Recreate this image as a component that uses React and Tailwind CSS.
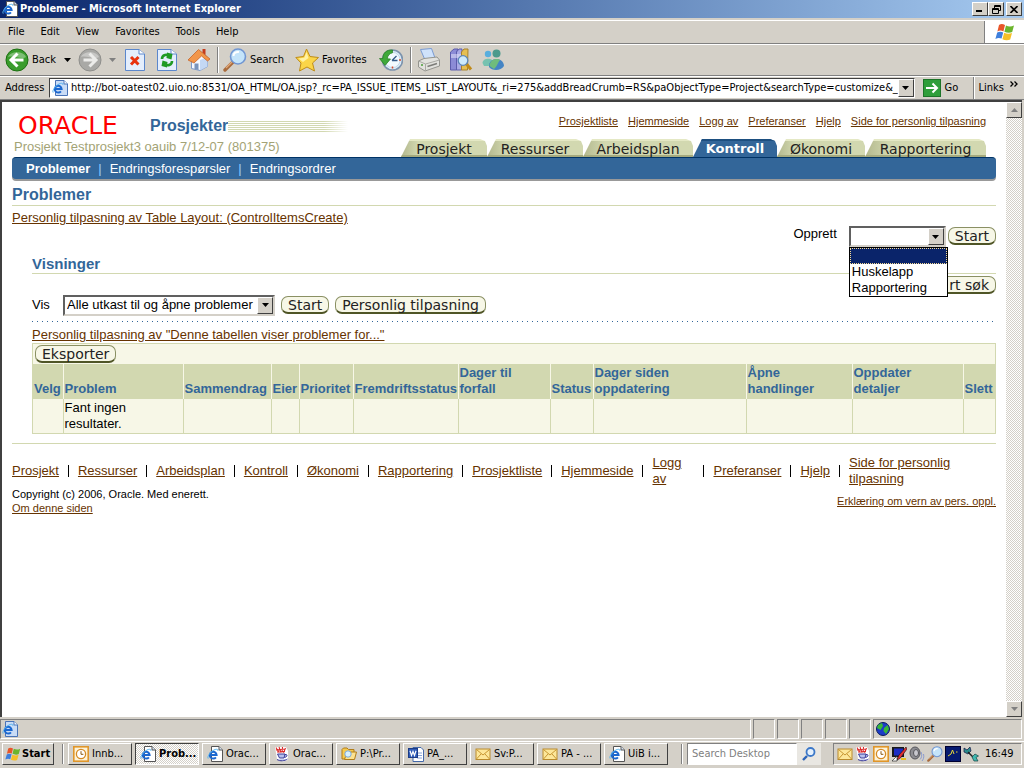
import React from "react";

const chromeFont = "font-['DejaVu_Sans_Condensed','DejaVu_Sans',sans-serif]";

/* ---------- icons ---------- */

function IEMark() {
  return (
    <g fill="none" stroke="#1c68d0">
      <path d="M2.800 9H9.600A3.400 3.400 0 1 0 8.900 11.300" strokeWidth="2" />
      <path d="M1.200 12.600C-.2 11 3.200 5.800 7 4C9.800 2.600 11.400 3.400 10.800 5" stroke="#55b4f0" strokeWidth="1" />
    </g>
  );
}

function IEIcon({ className = "size-4" }) {
  return (
    <svg viewBox="0 0 16 16" className={className} aria-hidden="true">
      <path d="M4.500 .5H12L15.500 4V15.500H4.500Z" fill="#fff" stroke="#555" />
      <path d="M12 .5V4H15.500" fill="#d8e4f4" stroke="#555" />
      <IEMark />
    </svg>
  );
}

function IEBlueIcon() {
  return (
    <svg viewBox="0 0 16 16" className="size-4 shrink-0" aria-hidden="true">
      <path d="M3.500 .5H12L15.500 4V15.500H3.500Z" fill="#c9dcf6" stroke="#4a74b8" />
      <path d="M12 .5V4H15.500" fill="#fff" stroke="#4a74b8" />
      <IEMark />
    </svg>
  );
}

function WindowsFlag({ className }) {
  return (
    <svg viewBox="0 0 20 20" className={className} aria-hidden="true">
      <path d="M4 3C6 1.600 8 2 10 3L8.400 9.400C6.400 8.400 4.600 8.200 2.400 9.600Z" fill="#e8562a" />
      <path d="M11 3.400C13 4.600 16 5 19 3.400L17.200 10C15 11.200 12 11 9.400 9.800Z" fill="#6cb52d" />
      <path d="M2.200 10.600C4.200 9.400 6.200 9.400 8.200 10.400L6.600 16.600C4.600 15.600 2.600 15.600 .4 17Z" fill="#3f7fdc" />
      <path d="M9.200 10.800C11.600 12 14.400 12.200 17 11L15.200 17.400C12.800 18.600 10 18.400 7.400 17.200Z" fill="#f6bf26" />
    </svg>
  );
}

function RoundArrow({ green }) {
  return (
    <svg viewBox="0 0 24 24" className="size-6" aria-hidden="true">
      <circle cx="12" cy="12" r="11" fill={green ? "#3a9c2c" : "#a9a9a6"} stroke={green ? "#1c7012" : "#8f8f8c"} />
      <path d="M3 9C5 2.500 19 2.500 21 9C17 12 8 7 3 9Z" fill="#fff" opacity=".35" />
      {green ? (
        <path d="M12.500 5.500L6 12L12.500 18.500M6.500 12H18.500" fill="none" stroke="#fff" strokeWidth="3" />
      ) : (
        <path d="M11.500 5.500L18 12L11.500 18.500M17.500 12H5.500" fill="none" stroke="#ececea" strokeWidth="3" />
      )}
    </svg>
  );
}

function StopIcon() {
  return (
    <svg viewBox="0 0 20 24" className="h-6 w-5" aria-hidden="true">
      <path d="M.5 1.500H14L19.500 6V22.500H.5Z" fill="#e4eefc" stroke="#5b87cc" />
      <path d="M14 1.500V6H19.500" fill="#fff" stroke="#5b87cc" />
      <path d="M6 9L13.500 16.500M13.500 9L6 16.500" stroke="#e8320e" strokeWidth="3" />
    </svg>
  );
}

function RefreshIcon() {
  return (
    <svg viewBox="0 0 20 24" className="h-6 w-5" aria-hidden="true">
      <path d="M.5 1.500H14L19.500 6V22.500H.5Z" fill="#e4eefc" stroke="#5b87cc" />
      <path d="M14 1.500V6H19.500" fill="#fff" stroke="#5b87cc" />
      <path d="M5 11C5 7 9 6 11.500 7.500M15 13C15 17 11 18 8.500 16.500" fill="none" stroke="#1f9a24" strokeWidth="2.600" />
      <path d="M10 4.500L15.500 6L14.500 11.500L9.500 10Z" fill="#1f9a24" />
      <path d="M10 19.500L4.500 18L5.500 12.500L10.500 14Z" fill="#1f9a24" />
    </svg>
  );
}

function HomeIcon() {
  return (
    <svg viewBox="0 0 24 24" className="size-6" aria-hidden="true">
      <path d="M4.500 12V20.500L13 22.500L20.500 18.500V9L14 4Z" fill="#f5f8ff" stroke="#7c98c8" />
      <path d="M13 22.500V12L20.500 9V18.500Z" fill="#c4d8f4" />
      <path d="M15.500 1H18.500V7L15.500 5Z" fill="#c63c1c" />
      <path d="M1 12L11.500 1.500L23 11L20.500 13L14.500 8L7 15Z" fill="#f2964a" stroke="#c8642a" strokeWidth=".8" />
      <path d="M7.500 15.500H11.500V22L7.500 21Z" fill="#7a94bc" />
    </svg>
  );
}

function Magnifier({ className = "size-6" }) {
  return (
    <svg viewBox="0 0 24 24" className={className} aria-hidden="true">
      <path d="M9.500 14.500L2 22" stroke="#a86a3c" strokeWidth="3.400" strokeLinecap="round" />
      <path d="M9 14L3 20" stroke="#e0a878" strokeWidth="1.200" />
      <circle cx="15" cy="8.500" r="7.500" fill="#c4e4fa" stroke="#7196d2" strokeWidth="1.600" />
      <path d="M10.500 8C10.500 5 13 3.500 16 4" stroke="#fff" strokeWidth="2" fill="none" />
    </svg>
  );
}

function StarIcon() {
  return (
    <svg viewBox="0 0 24 24" className="size-6" aria-hidden="true">
      <path d="M11.500 1L15 8.500L23.500 9.500L17.500 15L19.500 23L12 19L4.500 23L6 15L.8 9.500L8.500 8.500Z" fill="#fbd548" stroke="#bf8d18" />
      <path d="M11.500 4L13.500 10L8 14L3.500 10.500L9.300 9.700Z" fill="#fff2a4" />
    </svg>
  );
}

function HistoryIcon() {
  return (
    <svg viewBox="0 0 24 24" className="size-6" aria-hidden="true">
      <circle cx="13.500" cy="12" r="10" fill="#dceefa" stroke="#7d93ad" strokeWidth="1.600" />
      <circle cx="13.500" cy="12" r="7.600" fill="#f2faff" stroke="#b0c4d8" strokeWidth=".6" />
      <path d="M13 12.500L17.500 8M13 12.500H18.500" stroke="#335a88" strokeWidth="1.300" />
      <path d="M13.500 18.500V20.500M20 12H22" stroke="#d84a2a" strokeWidth="1.500" />
      <path d="M13.500 2C7.500 1.500 3.800 5 3.800 10.500H.5L6 17.500L11.500 11L8.300 10.800C8.600 7.500 10.500 5.500 13.500 4.800Z" fill="#3fa83a" stroke="#1f7a1c" strokeWidth=".7" />
    </svg>
  );
}

function PrinterIcon() {
  return (
    <svg viewBox="0 0 24 24" className="size-6" aria-hidden="true">
      <path d="M3.500 1.500L14.500 .5L18 10L8 12Z" fill="#cfe2fb" stroke="#7a9bd2" />
      <path d="M1.500 13L7 10.500L20 9L22.500 12V18L8 23L1.500 19Z" fill="#e2e2de" stroke="#95958f" />
      <path d="M1.500 13L8.500 16L22.500 12M8.500 16V23" fill="none" stroke="#aaaaa4" />
      <path d="M10.500 18.500L20 15.500" stroke="#7c7c78" strokeWidth="1.600" />
      <circle cx="5" cy="17" r="1" fill="#4a9e3a" />
    </svg>
  );
}

function ResearchIcon() {
  return (
    <svg viewBox="0 0 24 24" className="size-6" aria-hidden="true">
      <path d="M1.500 4L5 1H9L7.500 4V22H1.500Z" fill="#8b8bd6" stroke="#5c5cac" />
      <path d="M7.500 4L10 1H13L12.500 22H7.500Z" fill="#a9a9e6" stroke="#5c5cac" />
      <path d="M12.500 4L15 1H19L18.500 22H12.500Z" fill="#e6bf52" stroke="#a8822c" />
      <path d="M2 7H12M2 9H12" stroke="#e8e8fc" />
      <path d="M17.500 16L22 21.500" stroke="#c08a1a" strokeWidth="3" />
      <circle cx="14" cy="12.500" r="4.800" fill="#cdeafc" stroke="#5c86b8" strokeWidth="1.300" />
    </svg>
  );
}

function MessengerIcon() {
  return (
    <svg viewBox="0 0 24 24" className="size-6" aria-hidden="true">
      <circle cx="7" cy="6" r="3.200" fill="#58aede" />
      <path d="M1.500 15C1.500 10 12 9 12.500 15L10 18H3Z" fill="#77c2b0" />
      <circle cx="15.500" cy="5.500" r="4" fill="#4b9a8c" />
      <path d="M8 19C7 9 22.500 8 23 18C20 23 11 23 8 19Z" fill="#4484c4" />
      <path d="M8.500 18C9 10.500 17 10 19 12C17 14 16 19 13 21Z" fill="#6fbc7c" />
    </svg>
  );
}

function MailIcon({ className = "size-4" }) {
  return (
    <svg viewBox="0 0 16 16" className={className} aria-hidden="true">
      <rect x="1" y="3" width="14" height="10.500" fill="#fde79a" stroke="#b98a2c" />
      <path d="M1.500 3.500L8 9L14.500 3.500M1.500 13L6 8M14.500 13L10 8" fill="none" stroke="#c79632" />
    </svg>
  );
}

function OutlookIcon({ className = "size-4" }) {
  return (
    <svg viewBox="0 0 16 16" className={className} aria-hidden="true">
      <rect x=".8" y=".8" width="14.400" height="14.400" fill="#fdf3d8" stroke="#e0962a" strokeWidth="1.600" />
      <circle cx="8" cy="8" r="4.600" fill="#fff" stroke="#d48a24" strokeWidth="1.300" />
      <path d="M8 5.200V8.300H10.400" fill="none" stroke="#8a5a14" />
    </svg>
  );
}

function JavaIcon({ className = "size-4" }) {
  return (
    <svg viewBox="0 0 16 16" className={className} aria-hidden="true">
      <path d="M1 1H12L14 5V14L9 15.500L3 13Z" fill="#fff" />
      <path d="M2 1.500L5 6.500M5 1L7 6.500M8.500 1L8 6.500M11.500 2L9.500 7M2 4L11 3M3 6L11 5.500" stroke="#dc2b2b" strokeWidth="1.100" fill="none" />
      <path d="M3.500 8H11L10 12H5.500ZM11 8.500C14 8 13.500 11 10.500 11.500M3 13.500C6 15.500 11 15 13.500 13" fill="#b9c2ee" stroke="#3c3c98" />
    </svg>
  );
}

function FolderIcon() {
  return (
    <svg viewBox="0 0 16 16" className="size-4" aria-hidden="true">
      <path d="M1 3.500L2.500 2H6L7.500 3.500H13V13H1Z" fill="#f6c94e" stroke="#b07c18" />
      <path d="M3.500 13.500L6 6H15.500L13.500 13.500Z" fill="#fce291" stroke="#b07c18" />
      <circle cx="7" cy="8" r="3.200" fill="#d8f0fc" stroke="#7aa8d8" />
    </svg>
  );
}

function WordIcon() {
  return (
    <svg viewBox="0 0 16 16" className="size-4" aria-hidden="true">
      <path d="M5 1.500H13L15.500 4V15.500H5Z" fill="#fff" stroke="#4468a8" />
      <path d="M9 7H14M9 9.500H14M9 12H14" stroke="#88a4d8" />
      <rect x=".5" y="2.500" width="9" height="9" fill="#2f5cb8" stroke="#1c3c86" />
      <path d="M2 4.800L3.500 9.500L5 5.500L6.500 9.500L8 4.800" fill="none" stroke="#fff" strokeWidth="1.200" />
    </svg>
  );
}

function GlobeIcon() {
  return (
    <svg viewBox="0 0 16 16" className="size-4" aria-hidden="true">
      <circle cx="8" cy="8" r="6.500" fill="#1c3cc8" stroke="#0a1c58" />
      <path d="M3 4L7 2L8 5L5.500 9L2 7ZM9 7L12.500 4L14 8L11 13L8.500 10Z" fill="#38b838" />
    </svg>
  );
}

function ScreenIcon() {
  return (
    <svg viewBox="0 0 16 16" className="size-4" aria-hidden="true">
      <path d="M1 1H13V11H1Z" fill="#1a1a1a" />
      <path d="M3 2.500H12V9.500H3Z" fill="#1c2cc4" />
      <path d="M15 1L8 9L5.500 14.500L9.500 12L16 3Z" fill="#e03030" stroke="#111" strokeWidth=".6" />
      <path d="M1 15L6 10V15Z" fill="#fff" stroke="#111" strokeWidth=".6" />
      <path d="M10 13H15" stroke="#e8c020" strokeWidth="2" />
    </svg>
  );
}

function SpeakerIcon() {
  return (
    <svg viewBox="0 0 16 16" className="size-4" aria-hidden="true">
      <ellipse cx="6" cy="7" rx="5" ry="6" fill="#8d8d92" stroke="#55555a" />
      <ellipse cx="7" cy="7" rx="2.500" ry="3.500" fill="#c8c8ce" stroke="#55555a" />
      <path d="M12 6C13.500 9 12.500 12 11 13.500M14.500 8C15.500 11 14 14 13 15" fill="none" stroke="#8c9cd0" />
    </svg>
  );
}

function GraphIcon() {
  return (
    <svg viewBox="0 0 16 16" className="size-4" aria-hidden="true">
      <rect x=".5" y=".5" width="15" height="15" fill="#061a70" stroke="#000030" />
      <path d="M3 10L6 8L7.500 4L9 8M11 6H12.500" fill="none" stroke="#e8d838" />
    </svg>
  );
}

function ModemIcon() {
  return (
    <svg viewBox="0 0 16 16" className="size-4" aria-hidden="true">
      <path d="M1 2L4 4L7 1L8 5L5 8L1 6Z" fill="#2c8c8c" stroke="#114" strokeWidth=".7" />
      <path d="M5 6L11 12" stroke="#222" strokeWidth="1.500" />
      <path d="M9 11L12 8L15.500 10L13 11.500L15 15L11 15Z" fill="#42b8b0" stroke="#144" strokeWidth=".7" />
    </svg>
  );
}

function Triangle({ className = "fill-black" }) {
  return (
    <svg viewBox="0 0 7 4" className={`h-1 w-[7px] ${className}`} aria-hidden="true">
      <path d="M0 0H7L3.500 4Z" />
    </svg>
  );
}

/* ---------- shared pieces ---------- */

const raised = "border border-t-white border-l-white border-r-[#404040] border-b-[#404040] bg-[#d4d0c8]";
const sunken = "border border-t-[#808080] border-l-[#808080] border-r-white border-b-white";

function Divider({ className = "" }) {
  return <div className={`w-[2px] self-stretch border-l border-[#808080] bg-white ${className}`} />;
}

function OraButton({ children, className = "justify-center", ...rest }) {
  return (
    <button
      className={`flex h-[18px] items-center rounded-[7px] border border-b-2 border-[#8a9063] border-b-[#4f5526] bg-[#f7f7e7] px-1.5 font-['DejaVu_Sans',sans-serif] text-[14px] leading-4 whitespace-nowrap text-[#222] ${className}`}
      {...rest}
    >
      {children}
    </button>
  );
}

function OraSelect({ id, className, children }) {
  return (
    <div className={`relative h-[21px] ${className}`}>
      <select
        id={id}
        className="size-full appearance-none border-2 border-t-[#606060] border-r-[#d4d0c8] border-b-[#d4d0c8] border-l-[#606060] bg-white pl-0.5 text-[13px] leading-4 text-black outline-none"
      >
        {children}
      </select>
      <span className={`pointer-events-none absolute top-0.5 right-0.5 flex h-[17px] w-4 items-center justify-center ${raised}`}>
        <Triangle />
      </span>
    </div>
  );
}

function ALink({ children, className = "" }) {
  return (
    <a href="#" className={`text-[#663300] underline ${className}`}>
      {children}
    </a>
  );
}

/* ---------- browser chrome ---------- */

function TitleBar() {
  return (
    <header className="flex h-[18px] items-center bg-linear-to-r from-[#0a246a] to-[#a6caf0] pr-0.5 pl-0.5">
      <IEIcon />
      <h1 className="ml-0.5 flex-1 text-[11px] leading-4 font-bold text-white">Problemer - Microsoft Internet Explorer</h1>
      <div className="flex">
        <button aria-label="Minimize" className={`flex h-3.5 w-4 items-end p-[3px] ${raised}`}>
          <span className="h-0.5 w-1.5 bg-black" />
        </button>
        <button aria-label="Restore" className={`flex h-3.5 w-4 items-center justify-center ${raised}`}>
          <svg viewBox="0 0 9 9" className="size-[9px]">
            <path d="M2.500 3V.5H8.500V5.500H6.500M2.500 1.500H8.500M.5 3.500H6.500V8.500H.5ZM.5 4.500H6.500" fill="none" stroke="#000" />
          </svg>
        </button>
        <button aria-label="Close" className={`ml-0.5 flex h-3.5 w-4 items-center justify-center ${raised}`}>
          <svg viewBox="0 0 8 7" className="h-[7px] w-2">
            <path d="M.5 0L7.500 7M7.500 0L.5 7" stroke="#000" strokeWidth="1.600" />
          </svg>
        </button>
      </div>
    </header>
  );
}

const menus = ["File", "Edit", "View", "Favorites", "Tools", "Help"];

function MenuBar() {
  return (
    <nav className="mt-0.5 flex h-6 border-t border-b border-t-white border-b-[#808080]">
      <div className="flex flex-1 items-center gap-4 pl-2">
        {menus.map((m) => (
          <button key={m}>{m}</button>
        ))}
      </div>
      <div className="flex w-10 items-center justify-center border-l border-[#808080] bg-white">
        <WindowsFlag className="size-5" />
      </div>
    </nav>
  );
}

function Toolbar() {
  return (
    <div className="flex h-8 items-center border-t border-b border-t-white border-b-[#808080] pl-[5px]">
      <button className="flex items-center gap-[3px]">
        <RoundArrow green />
        Back
      </button>
      <button aria-label="Back history" className="ml-2">
        <Triangle />
      </button>
      <button aria-label="Forward" className="ml-[7px]">
        <RoundArrow />
      </button>
      <button aria-label="Forward history" className="ml-[7px]">
        <Triangle className="fill-[#808080]" />
      </button>
      <div className="ml-[9px] flex items-center gap-3">
        <button aria-label="Stop">
          <StopIcon />
        </button>
        <button aria-label="Refresh">
          <RefreshIcon />
        </button>
        <button aria-label="Home" className="-ml-0.5">
          <HomeIcon />
        </button>
      </div>
      <Divider className="my-0.5 ml-1.5" />
      <button className="ml-1 flex items-center gap-[3px]">
        <Magnifier />
        Search
      </button>
      <button className="ml-[11px] flex items-center gap-[3px]">
        <StarIcon />
        Favorites
      </button>
      <button aria-label="History" className="ml-3">
        <HistoryIcon />
      </button>
      <Divider className="my-0.5 ml-[7px]" />
      <div className="ml-[5px] flex items-center gap-2">
        <button aria-label="Print">
          <PrinterIcon />
        </button>
        <button aria-label="Research">
          <ResearchIcon />
        </button>
        <button aria-label="Messenger">
          <MessengerIcon />
        </button>
      </div>
    </div>
  );
}

function AddressBar() {
  return (
    <div className="flex h-6 items-center border-t border-b border-t-white border-b-[#808080]">
      <label htmlFor="address" className="w-[49px] pl-[5px]">
        Address
      </label>
      <div className="flex h-5 min-w-0 flex-1 items-center border border-t-[#404040] border-r-white border-b-white border-l-[#404040] bg-white pl-0.5">
        <IEBlueIcon />
        <input
          id="address"
          readOnly
          className="ml-[3px] min-w-0 flex-1 bg-transparent leading-4 outline-none"
          value="http://bot-oatest02.uio.no:8531/OA_HTML/OA.jsp?_rc=PA_ISSUE_ITEMS_LIST_LAYOUT&_ri=275&addBreadCrumb=RS&paObjectType=Project&searchType=customize&_"
        />
        <button aria-label="Show addresses" className={`flex h-[18px] w-4 items-center justify-center ${raised}`}>
          <Triangle />
        </button>
      </div>
      <button className="ml-2 flex w-[50px] items-center gap-1">
        <svg viewBox="0 0 18 18" className="size-[18px]" aria-hidden="true">
          <rect x=".5" y=".5" width="17" height="17" fill="#2f9e3a" stroke="#1d7428" />
          <path d="M3 9H14M9.500 4.500L14 9L9.500 13.500" fill="none" stroke="#fff" strokeWidth="2" />
        </svg>
        Go
      </button>
      <Divider />
      <span className="ml-1">Links</span>
      <button aria-label="More links" className="mr-1.5 ml-1.5 self-start">
        <svg viewBox="0 0 8 6" className="mt-1 h-1.5 w-2">
          <path d="M.5 .5L3 3L.5 5.500M4.500 .5L7 3L4.500 5.500" fill="none" stroke="#000" strokeWidth="1.300" />
        </svg>
      </button>
    </div>
  );
}

function ScrollBar() {
  return (
    <div className="flex w-4 shrink-0 flex-col justify-between bg-[conic-gradient(#fff_25%,#d4d0c8_0_50%,#fff_0_75%,#d4d0c8_0)] bg-[length:2px_2px]">
      <button aria-label="Scroll up" className={`flex h-4 items-center justify-center ${raised}`}>
        <Triangle className="rotate-180 fill-[#808080]" />
      </button>
      <button aria-label="Scroll down" className={`flex h-4 items-center justify-center ${raised}`}>
        <Triangle className="fill-[#808080]" />
      </button>
    </div>
  );
}

/* ---------- Oracle page ---------- */

const globalLinks = ["Prosjektliste", "Hjemmeside", "Logg av", "Preferanser", "Hjelp", "Side for personlig tilpasning"];

const tabs = [
  { label: "Prosjekt", width: "w-[86px]" },
  { label: "Ressurser", width: "w-24" },
  { label: "Arbeidsplan", width: "w-[110px]" },
  { label: "Kontroll", width: "w-[84px]", active: true },
  { label: "Økonomi", width: "w-[88px]" },
  { label: "Rapportering", width: "w-[121px]" },
];

function Tab({ label, width, active }) {
  return (
    <a
      href="#"
      className={`flex h-[18px] items-center justify-center border-t-2 font-['DejaVu_Sans',sans-serif] leading-4 [clip-path:polygon(0_100%,9px_0,calc(100%-7px)_0,calc(100%-2px)_2px,100%_7px,100%_100%)] ${width} ${
        active
          ? "border-t-[#1d4f80] bg-[#336699] text-[13px] font-bold text-white"
          : "border-t-[#e4e8c4] bg-linear-to-r from-[#b3b88e] from-0% via-[#d2d8b0] via-20% to-[#d2d8b0] text-[14px] text-[#222] shadow-[inset_0_-2px_0_#a5aa7e]"
      }`}
    >
      {label}
    </a>
  );
}

function PageHeader() {
  return (
    <div>
      <div className="flex items-start justify-between">
        <div className="pt-0.5">
          <div className="flex h-5 items-center">
            <div className="w-[138px] pl-1.5 font-['DejaVu_Sans',sans-serif] text-[25px] leading-5 text-[#ff0000]">
              ORACLE
            </div>
            <div className="text-[16px] leading-5 font-bold text-[#336699]">Prosjekter</div>
            <div className="h-[11px] w-[120px] bg-[repeating-linear-gradient(#d2d8b0_0_1px,#fff_1px_2px)] [mask-image:linear-gradient(to_right,#000_80%,transparent)]" />
          </div>
          <div className="mt-[3px] pl-0.5 text-[13px] leading-4 text-[#a3a375]">
            Prosjekt Testprosjekt3 oauib 7/12-07 (801375)
          </div>
        </div>
        <div className="flex flex-col items-end gap-[11px] pr-2.5">
          <div className="flex gap-2.5 text-[11px] leading-3.5">
            {globalLinks.map((l) => (
              <ALink key={l}>{l}</ALink>
            ))}
          </div>
          <nav className="flex">
            {tabs.map((t) => (
              <Tab key={t.label} {...t} />
            ))}
          </nav>
        </div>
      </div>
      <nav className="flex h-[22px] items-center rounded-sm border-t border-[#003366] bg-[#336699] pl-3.5 text-[13px] leading-4 text-white shadow-[0_2px_0_#999]">
        <a href="#" className="font-bold">
          Problemer
        </a>
        <span className="px-2 text-[#99ccff]">|</span>
        <a href="#">Endringsforespørsler</a>
        <span className="px-2 text-[#99ccff]">|</span>
        <a href="#">Endringsordrer</a>
      </nav>
    </div>
  );
}

const columns = [
  { label: "Velg", width: "w-[30px]" },
  { label: "Problem", width: "w-[120px]", value: "Fant ingen resultater." },
  { label: "Sammendrag", width: "w-[88px]" },
  { label: "Eier", width: "w-7" },
  { label: "Prioritet", width: "w-[54px]" },
  { label: "Fremdriftsstatus", width: "w-[105px]" },
  { label: "Dager til forfall", width: "w-[92px]" },
  { label: "Status", width: "w-[43px]" },
  { label: "Dager siden oppdatering", width: "w-[153px]" },
  { label: "Åpne handlinger", width: "w-[106px]" },
  { label: "Oppdater detaljer", width: "w-[111px]" },
  { label: "Slett", width: "w-[32px]" },
];

function wrapWidth(label) {
  return label.includes(" ") ? "block max-w-20" : "block whitespace-nowrap";
}

function IssueTable() {
  return (
    <div className="border border-[#d2d8b0] bg-[#f7f7e7]">
      <div className="flex h-5 items-center pl-0.5">
        <OraButton>Eksporter</OraButton>
      </div>
      <table className="w-full table-fixed border-collapse text-[13px] leading-4">
        <thead>
          <tr className="h-[35px] bg-[#d2d8b0] text-left align-bottom text-[#336699]">
            {columns.map((c) => (
              <th key={c.label} className={`border-l border-[#f7f7e7] px-0 pb-0.5 pl-px align-bottom first:border-l-0 ${c.width}`}>
                <span className={wrapWidth(c.label)}>{c.label}</span>
              </th>
            ))}
          </tr>
        </thead>
        <tbody>
          <tr className="h-[34px] align-top">
            {columns.map((c) => (
              <td key={c.label} className="border-l border-[#d2d8b0] p-px first:border-l-0">
                <span className="block max-w-20">{c.value}</span>
              </td>
            ))}
          </tr>
        </tbody>
      </table>
    </div>
  );
}

const footerLinks = [
  "Prosjekt",
  "Ressurser",
  "Arbeidsplan",
  "Kontroll",
  "Økonomi",
  "Rapportering",
  "Prosjektliste",
  "Hjemmeside",
  "Logg av",
  "Preferanser",
  "Hjelp",
  "Side for personlig tilpasning",
];

function footerWidth(label) {
  if (label === "Logg av") return "mr-2.5 w-8";
  if (label.startsWith("Side")) return "w-28";
  return "";
}

function PageFooter() {
  return (
    <footer className="mt-[9px] border-t border-[#d2d8b0] pt-[11px]">
      <div className="flex items-center gap-[9px]">
        {footerLinks.map((l, i) => (
          <React.Fragment key={l}>
            {i > 0 && <span className="h-3 w-px shrink-0 bg-black" />}
            <ALink className={footerWidth(l)}>{l}</ALink>
          </React.Fragment>
        ))}
      </div>
      <div className="flex items-center justify-between text-[11px] leading-3.5">
        <div>
          <div>Copyright (c) 2006, Oracle. Med enerett.</div>
          <ALink>Om denne siden</ALink>
        </div>
        <ALink>Erklæring om vern av pers. oppl.</ALink>
      </div>
    </footer>
  );
}

function OraclePage() {
  return (
    <main className="min-w-0 flex-1 bg-white pt-3 pr-2.5 pl-2.5 font-['Liberation_Sans',Arial,sans-serif] text-[13px] leading-4 text-black">
      <PageHeader />
      <h2 className="mt-1.5 border-b border-[#d2d8b0] text-[16px] leading-5 font-bold text-[#336699]">Problemer</h2>
      <div className="mt-1">
        <ALink>Personlig tilpasning av Table Layout: (ControlItemsCreate)</ALink>
      </div>
      <div className="flex items-start justify-end">
        <label htmlFor="opprett" className="mr-3">
          Opprett
        </label>
        <div className="relative">
          <OraSelect id="opprett" className="w-[97px]">
            <option value=""></option>
            <option>Huskelapp</option>
            <option>Rapportering</option>
          </OraSelect>
          <ul role="listbox" aria-label="Opprett" className="absolute top-[21px] left-0 z-10 w-[99px] border border-black bg-white">
            <li role="option" aria-selected="true" className="h-4 border border-dotted border-[#f5db95] bg-[#0a246a]" />
            <li role="option" aria-selected="false" className="h-4 pl-0.5">
              Huskelapp
            </li>
            <li role="option" aria-selected="false" className="h-4 pl-0.5">
              Rapportering
            </li>
          </ul>
        </div>
        <div className="mt-px ml-0.5">
          <OraButton>Start</OraButton>
        </div>
      </div>
      <section className="mt-[7px] pl-5">
        <h3 className="border-b border-[#d2d8b0] text-[15px] leading-[19px] font-bold text-[#336699]">Visninger</h3>
        <div className="mt-0.5 flex justify-end">
          <OraButton aria-label="Avansert søk" className="w-26 justify-end">
            rt søk
          </OraButton>
        </div>
        <div className="flex h-[22px] items-center">
          <label htmlFor="vis" className="w-[31px]">
            Vis
          </label>
          <OraSelect id="vis" className="w-[212px]">
            <option>Alle utkast til og åpne problemer</option>
          </OraSelect>
          <div className="ml-1.5 flex gap-1.5">
            <OraButton>Start</OraButton>
            <OraButton>Personlig tilpasning</OraButton>
          </div>
        </div>
        <div className="mt-[5px] h-px bg-[repeating-linear-gradient(to_right,#336699_0_1px,transparent_1px_5px)]" />
        <div className="mt-[5px]">
          <ALink>Personlig tilpasning av "Denne tabellen viser problemer for..."</ALink>
        </div>
        <IssueTable />
      </section>
      <PageFooter />
    </main>
  );
}

/* ---------- status bar and taskbar ---------- */

function StatusBar() {
  return (
    <div className="flex h-5 gap-0.5 pr-0.5">
      <div className={`flex flex-1 items-center pl-px ${sunken}`}>
        <IEBlueIcon />
      </div>
      {[0, 1, 2, 3, 4].map((n) => (
        <div key={n} className={`w-[22px] ${sunken}`} />
      ))}
      <div className={`flex w-[149px] items-center gap-1 pl-px ${sunken}`}>
        <GlobeIcon />
        Internet
      </div>
    </div>
  );
}

const tasks = [
  { label: "Innb...", icon: <OutlookIcon /> },
  { label: "Prob...", icon: <IEIcon />, active: true },
  { label: "Orac...", icon: <IEIcon /> },
  { label: "Orac...", icon: <JavaIcon /> },
  { label: "P:\\Pr...", icon: <FolderIcon /> },
  { label: "PA_...", icon: <WordIcon /> },
  { label: "Sv:P...", icon: <MailIcon /> },
  { label: "PA - ...", icon: <MailIcon /> },
  { label: "UiB i...", icon: <IEIcon /> },
];

function TaskButton({ label, icon, active }) {
  return (
    <button
      className={`flex h-[22px] w-16 items-center gap-[3px] overflow-hidden pl-1 whitespace-nowrap ${
        active
          ? "border border-t-[#404040] border-r-white border-b-white border-l-[#404040] bg-[conic-gradient(#fff_25%,#d4d0c8_0_50%,#fff_0_75%,#d4d0c8_0)] bg-[length:2px_2px] font-bold"
          : raised
      }`}
    >
      <span className="shrink-0">{icon}</span>
      {label}
    </button>
  );
}

function TaskBar() {
  return (
    <div className="mt-0.5 flex h-[27px] items-center border-t border-white pb-0.5 pl-0.5">
      <button className={`flex h-[22px] w-[52px] items-center gap-px pl-0.5 font-bold ${raised}`}>
        <WindowsFlag className="size-4" />
        Start
      </button>
      <Divider className="my-0.5 mr-1 ml-2" />
      <div className="flex flex-1 gap-[3px]">
        {tasks.map((t, i) => (
          <TaskButton key={i} {...t} />
        ))}
      </div>
      <Divider className="my-0.5 mr-1" />
      <div className="flex h-[22px] w-[134px]">
        <input
          aria-label="Search Desktop"
          placeholder="Search Desktop"
          className="w-[110px] border border-t-[#808080] border-r-white border-b-white border-l-[#808080] bg-white pl-1 outline-none placeholder:text-[#808080]"
        />
        <button aria-label="Search" className="flex w-6 items-center justify-center bg-[#e9e7e2]">
          <svg viewBox="0 0 16 16" className="size-4">
            <path d="M6 10L2 14" stroke="#2c64b8" strokeWidth="2.400" />
            <circle cx="9.500" cy="6" r="4" fill="#e4f0fc" stroke="#3c78c8" strokeWidth="1.800" />
          </svg>
        </button>
      </div>
      <div className={`mr-0.5 ml-3 flex h-[22px] w-[189px] items-center gap-0.5 pl-[3px] ${sunken}`}>
        <MailIcon />
        <JavaIcon />
        <OutlookIcon />
        <ScreenIcon />
        <SpeakerIcon />
        <Magnifier className="size-4" />
        <GraphIcon />
        <ModemIcon />
        <span className="ml-1">16:49</span>
      </div>
    </div>
  );
}

export default function App() {
  return (
    <div className={`flex min-h-screen flex-col bg-[#d4d0c8] text-[11px] leading-4 text-black ${chromeFont}`}>
      <TitleBar />
      <MenuBar />
      <Toolbar />
      <AddressBar />
      <div className="mr-0.5 mb-0.5 flex flex-1 border-t-2 border-l-2 border-[#404040]">
        <OraclePage />
        <ScrollBar />
      </div>
      <StatusBar />
      <TaskBar />
    </div>
  );
}
